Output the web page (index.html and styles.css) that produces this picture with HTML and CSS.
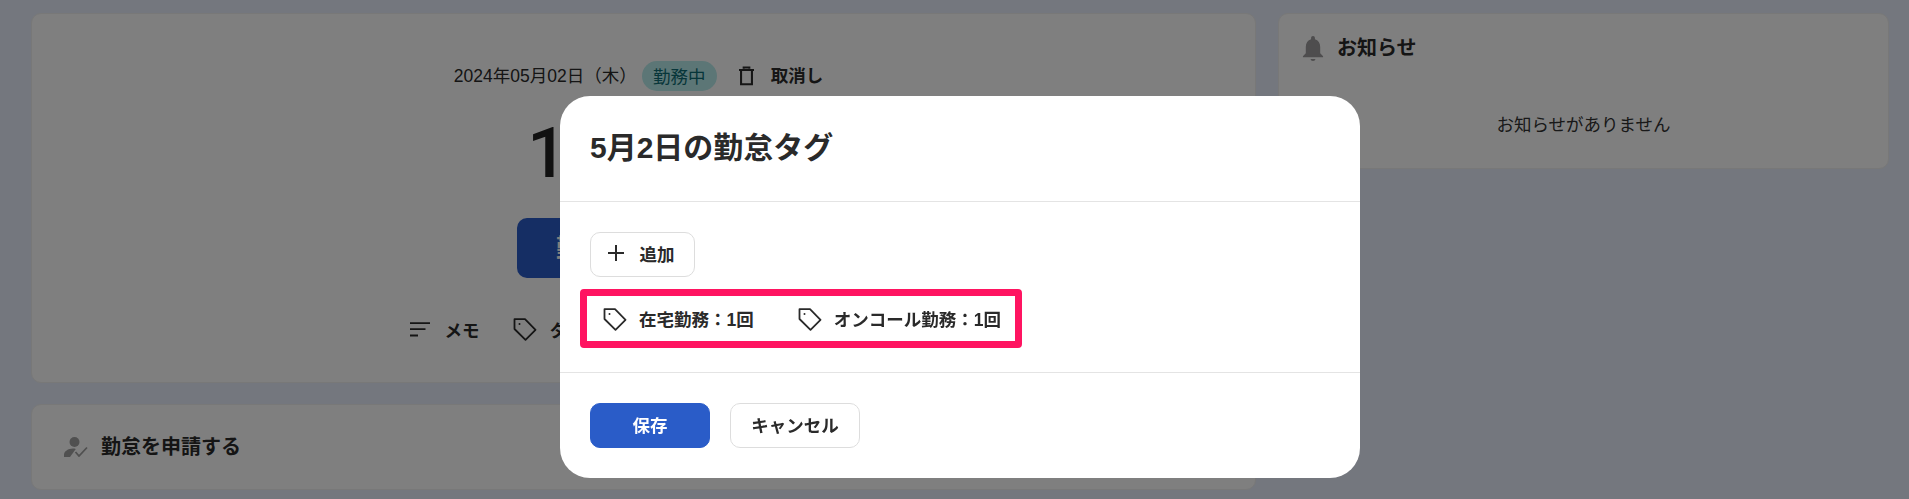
FILE: index.html
```html
<!DOCTYPE html>
<html lang="ja">
<head>
<meta charset="utf-8">
<title>勤怠タグ</title>
<link rel="stylesheet" href="styles.css">
</head>
<body>
<div class="page">
  <main class="main">
    <section class="card clock">
      <div class="date-row">
        <span class="date">2024年05月02日（木）</span>
        <span class="pill">勤務中</span>
        <svg class="trash" viewBox="0 0 16 20"><path d="M5 2.200V1h6v1.200M0 3.500h16M2.200 4v14.800h11.600V4" fill="none" stroke="currentColor" stroke-width="2.200"/></svg>
        <b class="cancel-link">取消し</b>
      </div>
      <div class="time">10:00<small>:00</small></div>
      <div class="end-btn">勤務を終了する</div>
      <div class="tools">
        <span class="tool">
          <svg class="memo-icon" viewBox="0 0 20 15"><path d="M0 1.200h20M0 7.200h15.500M0 13.500h8" fill="none" stroke="currentColor" stroke-width="1.800"/></svg>
          メモ
        </span>
        <span class="tool tool-tag">
          <svg class="tag-icon" viewBox="0 0 24 24"><path d="M1.500 2.200h10.500L22.500 12.800 12.500 22.800 1.500 12z" fill="none" stroke="currentColor" stroke-width="1.800" stroke-linejoin="round"/><circle cx="6.500" cy="7" r="1" fill="currentColor"/></svg>
          タグ
        </span>
      </div>
    </section>
    <section class="card apply">
      <svg class="apply-icon" viewBox="0 0 24 20"><circle cx="10.500" cy="5" r="5" fill="currentColor"/><path d="M0 20v-2.500c0-3 4-6 9-6 1 0 2 .2 2.800.4L6 20z" fill="currentColor"/><path d="M11.500 15l3.500 4 8-8.500" fill="none" stroke="currentColor" stroke-width="1.800"/></svg>
      <h2 class="card-title">勤怠を申請する</h2>
    </section>
  </main>
  <aside class="side">
    <section class="card notice">
      <div class="notice-head">
        <svg class="bell" viewBox="0 0 22 26"><path d="M11 0c1.200 0 2 .8 2 2v1.500c3.500 1 5.500 4 5.500 8v6.500l3 3v1H.500v-1l3-3v-6.500c0-4 2-7 5.500-8V2c0-1.200.8-2 2-2z" fill="currentColor"/><path d="M8.500 24h5c0 1.200-1.100 2-2.500 2s-2.500-.8-2.500-2z" fill="currentColor"/></svg>
        <h2 class="card-title">お知らせ</h2>
      </div>
      <p class="notice-empty">お知らせがありません</p>
    </section>
  </aside>
</div>
<div class="overlay">
  <div class="modal" role="dialog">
    <header class="modal-head"><h1 class="modal-title">5月2日の勤怠タグ</h1></header>
    <div class="modal-body">
      <button class="btn btn-add">
        <svg class="plus" viewBox="0 0 16 16"><path d="M8 0v16M0 8h16" fill="none" stroke="currentColor" stroke-width="2"/></svg>
        追加
      </button>
      <div class="tags">
        <span class="tag">
          <svg class="tag-icon" viewBox="0 0 24 24"><path d="M1.500 2.200h10.500L22.500 12.800 12.500 22.800 1.500 12z" fill="none" stroke="currentColor" stroke-width="1.800" stroke-linejoin="round"/><circle cx="6.500" cy="7" r="1" fill="currentColor"/></svg>
          在宅勤務：1回
        </span>
        <span class="tag">
          <svg class="tag-icon" viewBox="0 0 24 24"><path d="M1.500 2.200h10.500L22.500 12.800 12.500 22.800 1.500 12z" fill="none" stroke="currentColor" stroke-width="1.800" stroke-linejoin="round"/><circle cx="6.500" cy="7" r="1" fill="currentColor"/></svg>
          オンコール勤務：1回
        </span>
      </div>
    </div>
    <footer class="modal-foot">
      <button class="btn btn-save">保存</button>
      <button class="btn btn-cancel">キャンセル</button>
    </footer>
  </div>
</div>
</body>
</html>
```
FILE: styles.css
```css
* { box-sizing: border-box; }
html, body { margin: 0; height: 100%; overflow: hidden; }
body {
  background: #e9eefc;
  color: #2a2a2a;
  font-family: "Liberation Sans", "Noto Sans CJK JP", sans-serif;
  font-size: 17.5px;
}
.page { display: flex; gap: 22px; padding: 13px 20px 0 31px; }
.main { width: 1225px; display: flex; flex-direction: column; gap: 21px; }
.side { flex: 1; }
.card { background: #fff; border: 1px solid #f0f0f0; border-radius: 10px; }
.clock { height: 370px; display: flex; flex-direction: column; align-items: center; padding-top: 47px; }
.date-row { display: flex; align-items: center; height: 30px; margin-right: 10px; }
.date { margin: 0 5px 3px 0; }
.pill { background: #b8ecec; color: #0e6c74; border-radius: 15px; width: 75px; height: 30px; padding-bottom: 2px; display: flex; align-items: center; justify-content: center; margin-right: 22px; }
.trash { width: 15px; height: 20px; margin-right: 17px; }
.cancel-link { font-weight: 700; margin-bottom: 3px; }
.time { font-family: Roboto, "Liberation Sans", sans-serif; font-weight: 500; font-size: 70px; line-height: 84px; margin: 20px 10px 0 0; color: #222; }
.time small { font-size: 32px; line-height: 1; }
.end-btn { width: 253px; height: 60px; line-height: 60px; margin-top: 23px; background: #2a5cc8; color: #fff; border-radius: 10px; font-size: 25px; font-weight: 700; text-align: center; }
.tools { display: flex; gap: 33px; width: 468px; margin-top: 40px; }
.tool { display: flex; align-items: center; gap: 15px; font-weight: 700; height: 24px; padding-bottom: 2px; }
.tool-tag { gap: 13px; }
.memo-icon { width: 20px; height: 15px; }
.tag-icon { width: 24px; height: 24px; flex: none; }
.apply { height: 86px; display: flex; align-items: center; gap: 13px; padding-left: 32px; }
.apply-icon { width: 24px; height: 20px; color: #a0a0a0; }
.card-title { margin: 0 0 1px; font-size: 20px; line-height: 24px; font-weight: 700; }
.notice { height: 156px; padding: 22px 0 0 23px; }
.notice-head { display: flex; align-items: center; gap: 13px; height: 25px; }
.bell { width: 22px; height: 25px; color: #9c9a9c; }
.notice-empty { margin: 51px 0 0 -23px; text-align: center; font-size: 17.500px; line-height: 26px; color: #333; }
.overlay { position: fixed; inset: 0; background: rgba(0,0,0,.5); display: flex; justify-content: center; align-items: flex-start; padding: 96px 0 0 11px; }
.modal { width: 800px; height: 382px; background: #fff; border-radius: 30px; display: flex; flex-direction: column; }
.modal-head { height: 106px; padding: 32px 30px 0; border-bottom: 1px solid #e4e4e4; }
.modal-title { margin: 0; font-size: 30px; line-height: 40px; font-weight: 700; color: #2a2a2a; }
.modal-body { height: 171px; padding: 30px 30px 0; display: flex; flex-direction: column; align-items: flex-start; border-bottom: 1px solid #e4e4e4; }
.btn { font: inherit; font-weight: 700; height: 45px; border-radius: 10px; border: 1px solid #ddd; background: #fff; color: #2a2a2a; padding: 0 0 3px; display: flex; align-items: center; justify-content: center; }
.btn-add { width: 105px; gap: 16px; padding-right: 3px; }
.plus { width: 16px; height: 16px; }
.tags { margin: 12px 0 0 -10px; width: 442px; height: 59px; border: 7px solid #ff1461; border-radius: 4px; display: flex; align-items: center; gap: 44px; padding-left: 16px; font-weight: 700; color: #2a2a2a; }
.tag { display: flex; align-items: center; gap: 12px; }
.modal-foot { display: flex; gap: 20px; padding: 30px 30px 0; }
.btn-save { width: 120px; background: #2a5cc8; border-color: #2a5cc8; color: #fff; }
.btn-cancel { width: 130px; }
```
